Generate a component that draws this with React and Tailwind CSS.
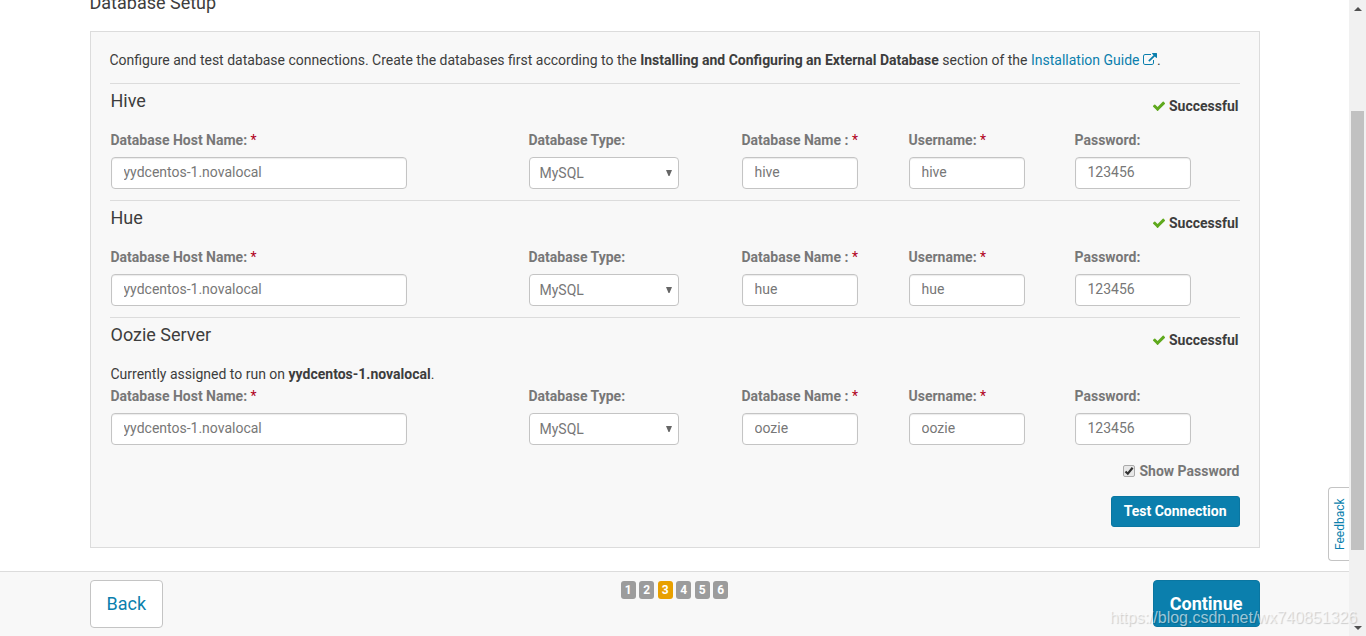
import { useState } from "react";

const services = [
  { id: "hive", title: "Hive", db: "hive", user: "hive" },
  { id: "hue", title: "Hue", db: "hue", user: "hue" },
  { id: "oozie", title: "Oozie Server", db: "oozie", user: "oozie", assigned: "yydcentos-1.novalocal" },
];

const steps = [1, 2, 3, 4, 5, 6];

const control =
  "block h-8 rounded border border-[#c4c4c4] bg-white text-[14px] text-[#777]";

function CheckIcon() {
  return (
    <svg viewBox="0 0 1792 1792" className="size-3.5 fill-[#5fa91d]" aria-hidden="true">
      <path d="M1671 566q0 40-28 68l-724 724-136 136q-28 28-68 28t-68-28l-136-136-362-362q-28-28-28-68t28-68l136-136q28-28 68-28t68 28l294 295 656-657q28-28 68-28t68 28l136 136q28 28 28 68z" />
    </svg>
  );
}

function ExternalIcon() {
  return (
    <svg viewBox="0 0 1792 1792" className="inline size-3.5 fill-current align-[-2px]" aria-hidden="true">
      <path d="M1408 928v320q0 119-84.5 203.5t-203.5 84.5h-832q-119 0-203.5-84.5t-84.5-203.5v-832q0-119 84.5-203.5t203.5-84.5h704q14 0 23 9t9 23v64q0 14-9 23t-23 9h-704q-66 0-113 47t-47 113v832q0 66 47 113t113 47h832q66 0 113-47t47-113v-320q0-14 9-23t23-9h64q14 0 23 9t9 23zm384-864v512q0 26-19 45t-45 19-45-19l-176-176-652 652q-10 10-23 10t-23-10l-114-114q-10-10-10-23t10-23l652-652-176-176q-19-19-19-45t19-45 45-19h512q26 0 45 19t19 45z" />
    </svg>
  );
}

function TextField({ id, label, required, value, width }) {
  return (
    <div className="flex flex-col gap-[7px]">
      <label htmlFor={id} className="font-bold leading-5 text-[#777]">
        {label} {required && <span className="font-normal text-[#b00020]">*</span>}
      </label>
      <input
        id={id}
        type="text"
        defaultValue={value}
        className={`${control} ${width} px-3 pb-0.5 shadow-[inset_0_1px_1px_rgba(0,0,0,0.08)]`}
      />
    </div>
  );
}

function TypeField({ id }) {
  return (
    <div className="flex flex-col gap-[7px]">
      <label htmlFor={id} className="font-bold leading-5 text-[#777]">
        Database Type:
      </label>
      <div className="relative w-[150px]">
        <select id={id} defaultValue="MySQL" className={`${control} w-full appearance-none px-2.5`}>
          <option>MySQL</option>
          <option>PostgreSQL</option>
          <option>Oracle</option>
        </select>
        <svg viewBox="0 0 6 6" className="pointer-events-none absolute right-[7px] top-[13px] size-1.5" aria-hidden="true">
          <path d="M0 0h6L3.5 6h-1z" fill="#666" />
        </svg>
      </div>
    </div>
  );
}

function Service({ service }) {
  const { id, title, db, user, assigned } = service;
  return (
    <section className="border-t border-[#dcdcdc] px-px pb-[11px]">
      <div className="mb-3 flex h-[34px] items-center justify-between">
        <h3 className="text-[18px] leading-6">{title}</h3>
        <span className="flex items-center gap-[3px] self-end pb-0.5 font-bold leading-5">
          <CheckIcon />
          Successful
        </span>
      </div>
      {assigned && (
        <p className="mb-0.5 leading-5">
          Currently assigned to run on <b>{assigned}</b>.
        </p>
      )}
      <div className="grid grid-cols-[418fr_213fr_167fr_166fr_164fr]">
        <TextField id={`${id}-host`} label="Database Host Name:" required value="yydcentos-1.novalocal" width="w-[296px]" />
        <TypeField id={`${id}-type`} />
        <TextField id={`${id}-db`} label="Database Name :" required value={db} width="w-[116px]" />
        <TextField id={`${id}-user`} label="Username:" required value={user} width="w-[116px]" />
        <TextField id={`${id}-password`} label="Password:" value="123456" width="w-[116px]" />
      </div>
    </section>
  );
}

export default function App() {
  const [show, setShow] = useState(true);
  return (
    <div className="flex min-h-screen overflow-hidden bg-white font-[Roboto,'Liberation_Sans',sans-serif] text-[14px] text-[#3d3d3d]">
      <div className="relative flex min-w-0 flex-1 flex-col">
        <main className="mx-auto w-full max-w-[1170px]">
          <h2 className="-mt-[9px] text-[18px] leading-6">Database Setup</h2>
          <div className="mt-4 border border-[#dcdcdc] bg-[#f8f8f8] px-[19px] pb-5 pt-[18px]">
            <p className="mb-[13px] leading-5">
              Configure and test database connections. Create the databases first according to the{" "}
              <b>Installing and Configuring an External Database</b> section of the{" "}
              <a href="#guide" className="text-[#0b7fad]">
                Installation Guide <ExternalIcon />
              </a>
              .
            </p>
            {services.map((service) => (
              <Service key={service.id} service={service} />
            ))}
            <div className="flex flex-col items-end gap-[15px] pt-[5px]">
              <label className="flex items-center gap-1 font-bold leading-5 text-[#777]">
                <span className="relative block size-3">
                  <input
                    type="checkbox"
                    checked={show}
                    onChange={(e) => setShow(e.target.checked)}
                    className="block size-3 appearance-none rounded-xs border border-[#aaa] bg-[#e8e8e8]"
                  />
                  {show && (
                    <svg viewBox="0 0 12 12" className="pointer-events-none absolute inset-0 size-3" aria-hidden="true">
                      <path d="M2.5 6.5 4.8 8.7 9.6 2.8" fill="none" stroke="#333" strokeWidth="2.2" />
                    </svg>
                  )}
                </span>
                Show Password
              </label>
              <button type="button" className="h-[31px] rounded-[3px] border border-[#0a76a1] bg-[#0b7fad] px-3 font-bold text-white">
                Test Connection
              </button>
            </div>
          </div>
        </main>

        <footer className="mt-auto border-t border-[#dcdcdc] bg-[#f8f8f8] pb-2 pt-2">
          <div className="mx-auto grid w-full max-w-[1170px] grid-cols-[1fr_auto_1fr] items-start">
            <button type="button" className="h-12 justify-self-start rounded border border-[#c4c4c4] bg-white px-4 pb-0.5 text-[18px] text-[#0b7fad]">
              Back
            </button>
            <ol className="leading-[18px]">
              {steps.map((n) => [
                <li
                  key={n}
                  className={`inline-block w-[15px] rounded-[3px] text-center text-[12px] font-bold leading-[18px] text-white ${
                    n === 3 ? "bg-[#e8a000]" : "bg-[#9c9c9c]"
                  }`}
                >
                  {n}
                </li>,
                " ",
              ])}
            </ol>
            <button type="button" className="h-[47px] justify-self-end rounded border border-[#0a76a1] bg-[#0b7fad] px-4 text-[18px] font-bold text-white">
              Continue
            </button>
          </div>
        </footer>

        <a
          href="#feedback"
          className="absolute bottom-[75px] right-0 flex h-[74px] w-[21px] rotate-180 items-center justify-center rounded-r border border-l-0 border-[#c4c4c4] bg-white pr-0.5 text-[12px] leading-none text-[#0b7fad] [writing-mode:vertical-rl]"
        >
          Feedback
        </a>
      </div>

      <div className="flex w-[17px] shrink-0 flex-col items-center bg-[#f1f1f1] pb-1.5 pt-[7px]" aria-hidden="true">
        <svg viewBox="0 0 8 4" className="h-1 w-2">
          <path d="M0 4 4 0l4 4z" fill="#505050" />
        </svg>
        <div className="mt-[100px] h-[439px] w-[13px] bg-[#c1c1c1]" />
        <svg viewBox="0 0 8 4" className="mt-auto h-1 w-2">
          <path d="M0 0h8L4 4z" fill="#505050" />
        </svg>
      </div>

      <span className="pointer-events-none absolute bottom-1.5 right-[9px] font-['Liberation_Sans',sans-serif] text-[16px] leading-6 text-white/60 [text-shadow:1px_1px_1px_rgba(0,0,0,0.18)]">
        https://blog.csdn.net/wx740851326
      </span>
    </div>
  );
}
